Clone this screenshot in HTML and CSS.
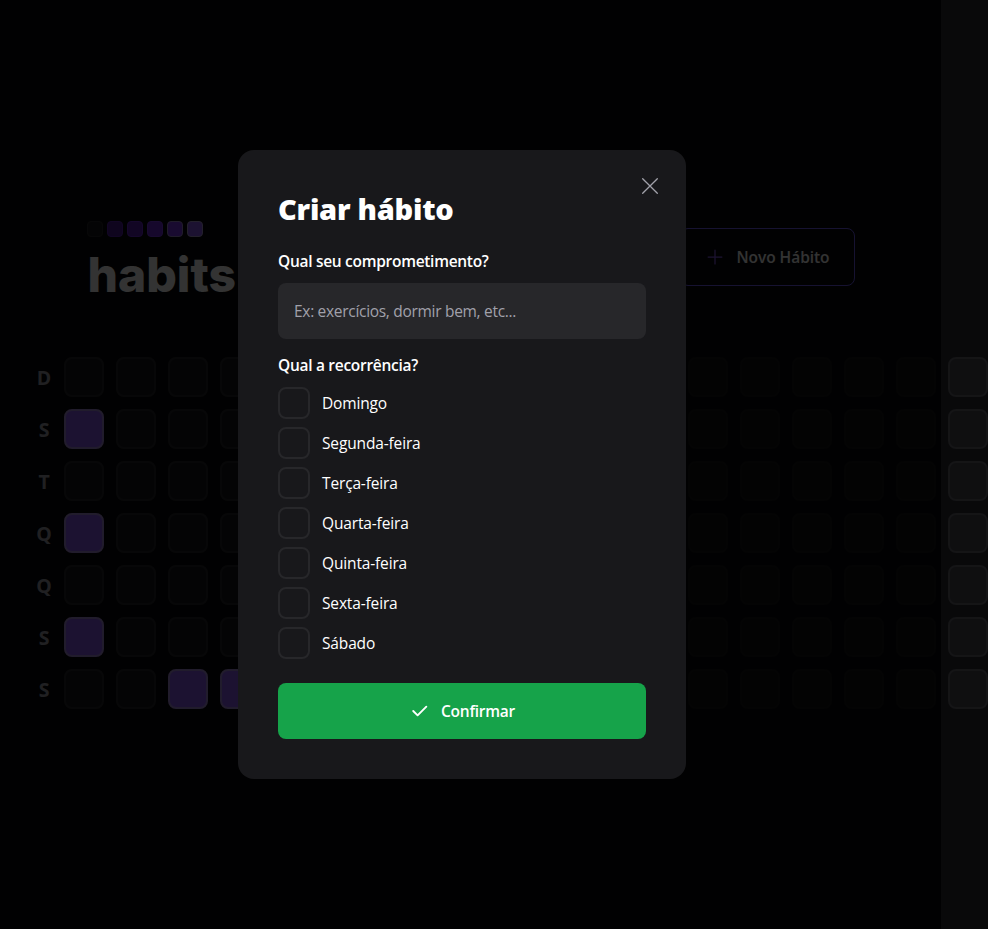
FILE: index.html
```html
<!DOCTYPE html>
<html lang="pt-BR">
<head>
<meta charset="utf-8">
<title>Habits</title>
<link rel="stylesheet" href="styles.css">
</head>
<body>
<main class="page">
  <header class="header">
    <div class="logo">
      <div class="swatches"><i class="l0"></i><i class="l1"></i><i class="l2"></i><i class="l3"></i><i class="l4"></i><i class="l5"></i></div>
      <div class="wordmark">habits</div>
    </div>
    <button class="new-habit">
      <svg width="20" height="20" viewBox="0 0 256 256" fill="none" stroke="#8b5cf6" stroke-width="16" stroke-linecap="round"><path d="M40 128H216M128 40V216"/></svg>
      <span>Novo Hábito</span>
    </button>
  </header>
  <section class="summary">
    <div class="weekdays"><span>D</span><span>S</span><span>T</span><span>Q</span><span>Q</span><span>S</span><span>S</span></div>
    <div class="days" id="days"></div>
  </section>
</main>
<div class="overlay"></div>
<div class="dialog-layer">
  <form class="dialog">
    <button type="button" class="close" aria-label="Fechar">
      <svg width="24" height="24" viewBox="0 0 256 256" fill="none" stroke="#a1a1aa" stroke-width="14" stroke-linecap="round"><path d="M50 50L206 206M206 50L50 206"/></svg>
    </button>
    <h1 class="title">Criar hábito</h1>
    <label class="label" for="title">Qual seu comprometimento?</label>
    <input class="input" id="title" type="text" placeholder="Ex: exercícios, dormir bem, etc...">
    <div class="label recurrence">Qual a recorrência?</div>
    <div class="options">
      <div class="option"><i class="box"></i><span>Domingo</span></div>
      <div class="option"><i class="box"></i><span>Segunda-feira</span></div>
      <div class="option"><i class="box"></i><span>Terça-feira</span></div>
      <div class="option"><i class="box"></i><span>Quarta-feira</span></div>
      <div class="option"><i class="box"></i><span>Quinta-feira</span></div>
      <div class="option"><i class="box"></i><span>Sexta-feira</span></div>
      <div class="option"><i class="box"></i><span>Sábado</span></div>
    </div>
    <button type="button" class="confirm">
      <svg width="20" height="20" viewBox="0 0 256 256" fill="none" stroke="#fff" stroke-width="24" stroke-linecap="round" stroke-linejoin="round"><path d="M222 72L110 184L54 128"/></svg>
      <span>Confirmar</span>
    </button>
  </form>
</div>
<script src="days.js"></script>
</body>
</html>
```
FILE: styles.css
```css
* { box-sizing: border-box; margin: 0; }
body {
  height: 929px;
  overflow: hidden;
  background: #09090a;
  color: #fff;
  font-family: "Open Sans", "Noto Sans", sans-serif;
  font-size: 15.5px;
  letter-spacing: -0.15px;
}
button { font: inherit; letter-spacing: inherit; color: inherit; background: none; border: 0; padding: 0; }
svg { display: block; flex: none; }

.page {
  width: 941px;
  height: 929px;
  display: flex;
  flex-direction: column;
  justify-content: center;
  align-items: center;
  gap: 64px;
}
.header {
  width: 768px;
  height: 72px;
  display: flex;
  align-items: center;
  justify-content: space-between;
}
.logo { height: 72px; }
.swatches { display: flex; gap: 4px; }
.swatches i { width: 16px; height: 16px; border: 1px solid; border-radius: 4px; }
.l0 { background: #18181b; border-color: #27272a !important; }
.l1 { background: #4c1d95; border-color: #5b21b6 !important; }
.l2 { background: #5b21b6; border-color: #6d28d9 !important; }
.l3 { background: #6d28d9; border-color: #7c3aed !important; }
.l4 { background: #7c3aed; border-color: #a28bd0 !important; }
.l5 { background: #8b5cf6; border-color: #b0a0d8 !important; }
.wordmark {
  margin-top: 10px;
  padding-left: 1px;
  font: 800 48px/56px Inter, sans-serif;
  letter-spacing: 0;
}
.new-habit {
  width: 175px;
  height: 58px;
  padding: 0 24px;
  border: 1px solid #6d5cf6;
  border-radius: 8px;
  display: flex;
  align-items: center;
  gap: 12px;
  font-weight: 600;
  letter-spacing: -0.05px;
  white-space: nowrap;
}

.summary { width: 941px; height: 352px; display: flex; }
.weekdays {
  width: 64px;
  padding-left: 24px;
  display: grid;
  grid-template-rows: repeat(7, 40px);
  gap: 12px;
  flex: none;
}
.weekdays span {
  height: 40px;
  width: 40px;
  padding-top: 2px;
  display: flex;
  align-items: center;
  justify-content: center;
  font-size: 19.5px;
  font-weight: 700;
  line-height: 38px;
  color: #a1a1aa;
}
.days {
  display: grid;
  grid-template-rows: repeat(7, 40px);
  grid-auto-flow: column;
  grid-auto-columns: 40px;
  gap: 12px;
}
.day {
  height: 40px;
  border: 2px solid #27272a;
  border-radius: 8px;
  background: #18181b;
}
.day.done { background: #8b5cf6; border-color: #a78bda; }
.day.future { opacity: .4; }

.overlay { position: fixed; top: 0; left: 0; width: 941px; height: 929px; background: rgba(0, 0, 0, .8); }
.dialog-layer {
  position: fixed;
  top: 0;
  left: 238px;
  width: 448px;
  height: 929px;
  display: flex;
  flex-direction: column;
  justify-content: center;
}
.dialog {
  position: relative;
  padding: 40px;
  background: #18181b;
  border-radius: 16px;
  display: flex;
  flex-direction: column;
}
.close { position: absolute; top: 24px; right: 24px; }
.title { padding-top: 1px; font-size: 29px; line-height: 36.5px; font-weight: 800; letter-spacing: -0.25px; }
.label { margin-top: 24px; line-height: 20px; font-weight: 600; letter-spacing: -0.29px; }
.recurrence { margin-top: 16px; }
.input {
  margin-top: 12px;
  height: 56px;
  padding: 16px;
  border: 0;
  border-radius: 8px;
  background: #27272a;
  color: #fff;
  font: inherit;
  letter-spacing: -0.3px;
}
.input::placeholder { color: #a1a1aa; opacity: 1; }
.options { margin-top: 12px; display: flex; flex-direction: column; gap: 8px; }
.option { height: 32px; display: flex; align-items: center; gap: 12px; line-height: 20px; }
.box { width: 32px; height: 32px; border: 2px solid #27272a; border-radius: 8px; }
.confirm {
  margin-top: 24px;
  height: 56px;
  border-radius: 8px;
  background: #16a34a;
  display: flex;
  align-items: center;
  justify-content: center;
  gap: 12px;
  font-weight: 600;
  letter-spacing: -0.25px;
}
```
FILE: days.js
```js
// Columns are weeks, filled top to bottom starting on Sunday.
const completed = new Set([1, 3, 5, 20, 27]);
const elapsed = 77;
const grid = document.getElementById('days');
for (let i = 0; i < 18 * 7; i++) {
  const cell = document.createElement('div');
  cell.className = 'day' + (completed.has(i) ? ' done' : '') + (i >= elapsed ? ' future' : '');
  grid.appendChild(cell);
}
```
